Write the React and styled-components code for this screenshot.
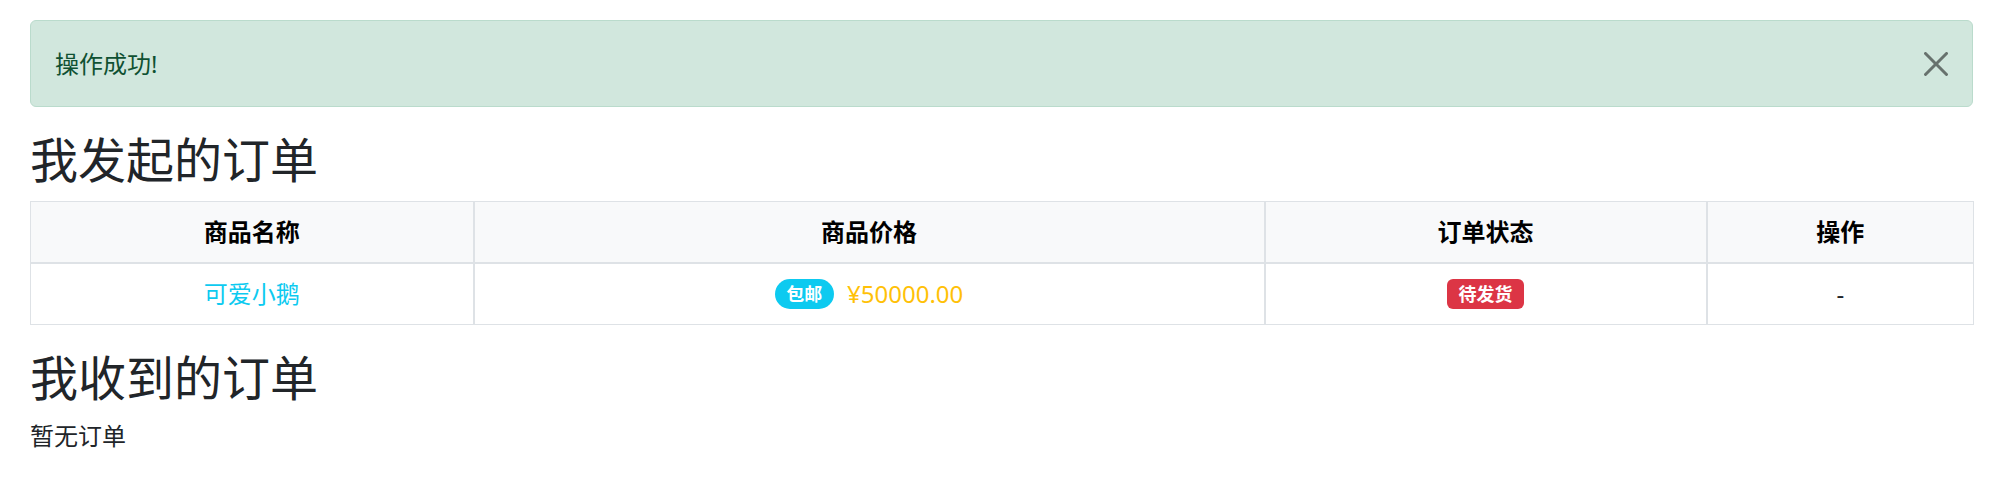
import React, { useState } from 'react';
import styled, { createGlobalStyle } from 'styled-components';

const GlobalStyle = createGlobalStyle`
    body {
        margin: 0;
        background: #fff;
        color: #212529;
        font-family: "Noto Sans", "Noto Sans CJK SC", sans-serif;
        font-size: 24px;
        line-height: 36px;
    }
`;

const Page = styled.div`
    padding: 20px 37px 0 30px;
`;

const Alert = styled.div`
    display: flex;
    align-items: center;
    justify-content: space-between;
    padding: 24.5px 24px;
    margin-bottom: 24px;
    background: #d1e7dd;
    border: 1px solid #badbcc;
    border-radius: 6px;
    color: #0f5132;
`;

const CloseButton = styled.button`
    display: flex;
    width: 24px;
    height: 24px;
    padding: 0;
    margin-top: 1px;
    border: none;
    background: none;
    opacity: 0.5;
    cursor: pointer;
`;

const Title = styled.h2`
    margin: 0 0 12px;
    font-size: 48px;
    line-height: 57.6px;
    font-weight: 400;
    color: #212529;
`;

const Table = styled.table`
    width: 100%;
    margin-bottom: 24px;
    border-collapse: collapse;
    table-layout: fixed;
    border: 1px solid #dee2e6;

    th, td {
        padding: 12px;
        text-align: center;
        vertical-align: middle;
        border: 1px solid #dee2e6;
    }
    th + th, td + td {
        border-left-width: 2px;
    }
    thead th {
        background: #f8f9fa;
        color: #000;
        font-weight: 700;
        border-bottom-width: 2px;
    }
`;

const Link = styled.a`
    color: #0dcaf0;
    text-decoration: none;
`;

const Badge = styled.span`
    display: inline-block;
    padding: 6px 11.7px;
    font-size: 18px;
    line-height: 18px;
    font-weight: 700;
    color: #fff;
    vertical-align: 2px;
    background: ${props => props.$bg};
    border-radius: ${props => props.$pill ? '50px' : '6px'};
`;

const Price = styled.span`
    margin-left: 13px;
    color: #ffc107;
`;

const Empty = styled.p`
    margin: 0 0 24px;
`;

const sent = [
    { name: '可爱小鹅', free: true, price: '¥50000.00', status: '待发货' }
];

export default function App() {
    const [show, setShow] = useState(true);

    return (
        <Page>
            <GlobalStyle />
            {show && (
                <Alert>
                    <span>操作成功!</span>
                    <CloseButton aria-label="Close" onClick={() => setShow(false)}>
                        <svg width="24" height="24" viewBox="0 0 16 16" fill="#000">
                            <path d="M.293.293a1 1 0 0 1 1.414 0L8 6.586 14.293.293a1 1 0 1 1 1.414 1.414L9.414 8l6.293 6.293a1 1 0 0 1-1.414 1.414L8 9.414l-6.293 6.293a1 1 0 0 1-1.414-1.414L6.586 8 .293 1.707a1 1 0 0 1 0-1.414z" />
                        </svg>
                    </CloseButton>
                </Alert>
            )}

            <Title>我发起的订单</Title>
            <Table>
                <colgroup>
                    <col style={{ width: 443 }} />
                    <col style={{ width: 791 }} />
                    <col style={{ width: 442 }} />
                    <col style={{ width: 267 }} />
                </colgroup>
                <thead>
                    <tr>
                        <th>商品名称</th>
                        <th>商品价格</th>
                        <th>订单状态</th>
                        <th>操作</th>
                    </tr>
                </thead>
                <tbody>
                    {sent.map((order, i) => (
                        <tr key={i}>
                            <td><Link href="#">{order.name}</Link></td>
                            <td>
                                {order.free && <Badge $bg="#0dcaf0" $pill>包邮</Badge>}
                                <Price>{order.price}</Price>
                            </td>
                            <td><Badge $bg="#dc3545">{order.status}</Badge></td>
                            <td>-</td>
                        </tr>
                    ))}
                </tbody>
            </Table>

            <Title>我收到的订单</Title>
            <Empty>暂无订单</Empty>
        </Page>
    );
}
